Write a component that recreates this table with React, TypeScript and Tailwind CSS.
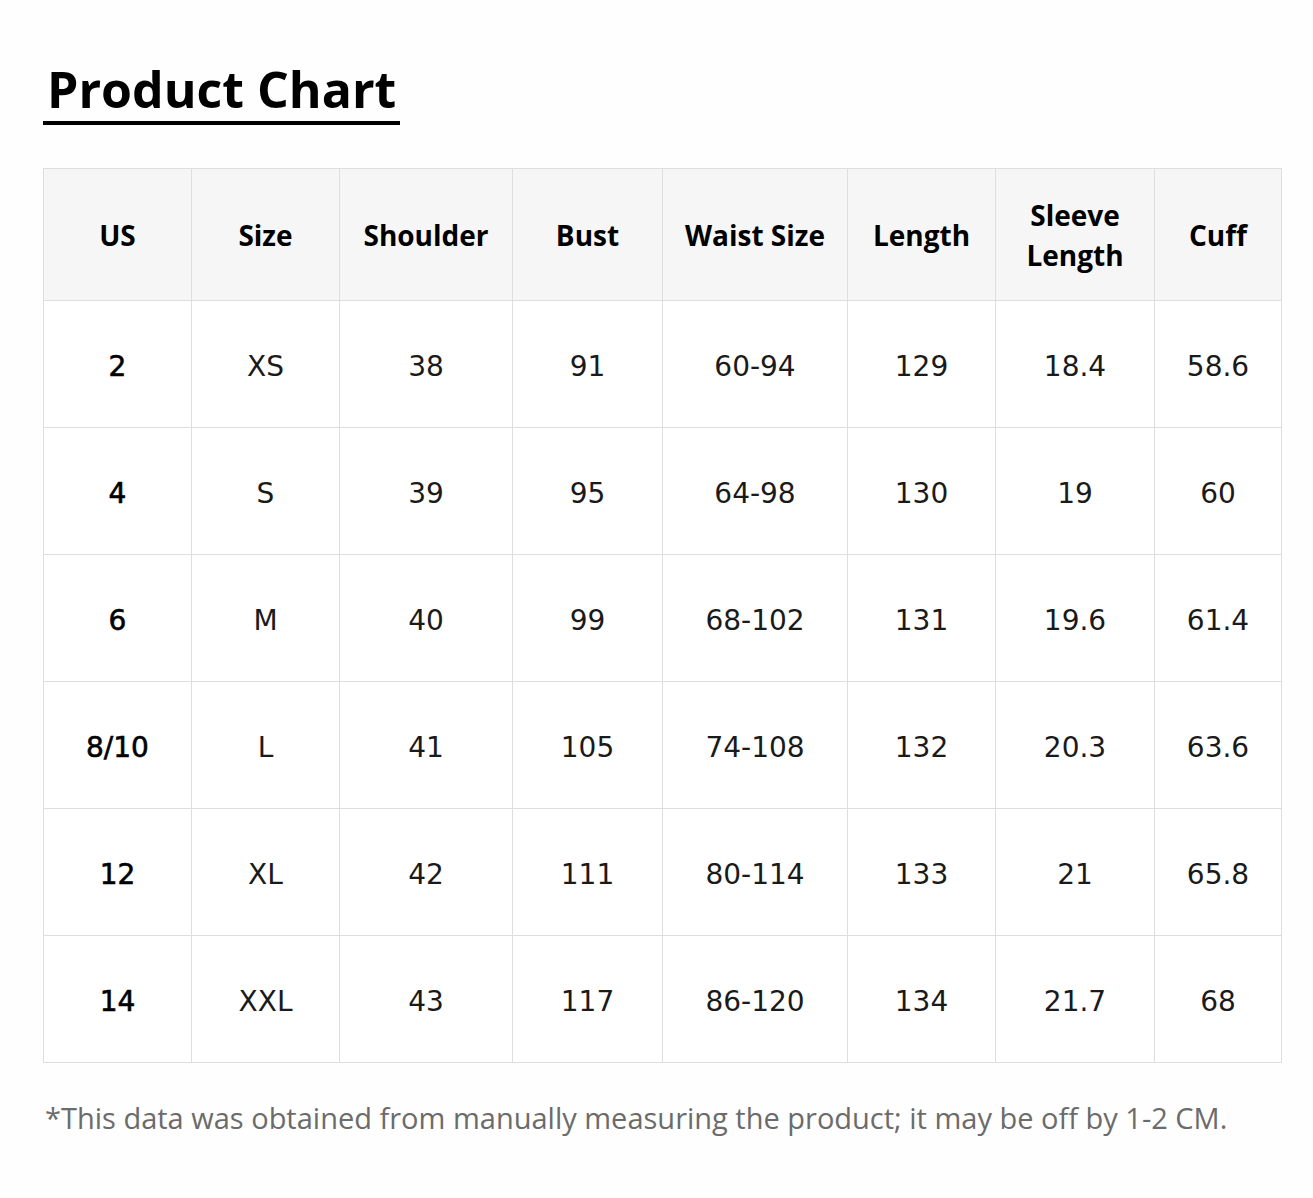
import React from 'react';

const headers = ['US', 'Size', 'Shoulder', 'Bust', 'Waist Size', 'Length', 'Sleeve Length', 'Cuff'];

const rows: string[][] = [
  ['2', 'XS', '38', '91', '60-94', '129', '18.4', '58.6'],
  ['4', 'S', '39', '95', '64-98', '130', '19', '60'],
  ['6', 'M', '40', '99', '68-102', '131', '19.6', '61.4'],
  ['8/10', 'L', '41', '105', '74-108', '132', '20.3', '63.6'],
  ['12', 'XL', '42', '111', '80-114', '133', '21', '65.8'],
  ['14', 'XXL', '43', '117', '86-120', '134', '21.7', '68'],
];

export default function App() {
  return (
    <div className="min-h-screen bg-[#fefefe] pl-[43px] pt-[64px]">
      <div className="inline-block border-b-4 border-black px-[4px] pb-[7px]">
        <h1 className="font-['Open_Sans',sans-serif] text-[50px] font-bold leading-none text-black">Product Chart</h1>
      </div>

      <div className="mt-[43px] grid w-[1239px] grid-cols-[148px_148px_173px_150px_185px_148px_159px_127px] border-l border-t border-[#dedede]">
        {headers.map((h) => (
          <div
            key={h}
            className="flex h-[132px] items-center justify-center border-b border-r border-[#dedede] bg-[#f6f6f6] px-2 text-center font-['Open_Sans',sans-serif] text-[28px] font-bold leading-[40px] text-black"
          >
            {h === 'Sleeve Length' ? (
              <span>
                Sleeve
                <br />
                Length
              </span>
            ) : (
              h
            )}
          </div>
        ))}
        {rows.map((r, i) =>
          r.map((c, j) => (
            <div
              key={i + '-' + j}
              className={
                j === 0
                  ? "flex h-[127px] items-center justify-center border-b border-r border-[#dedede] bg-white pt-[5px] font-[family-name:'DejaVu_Sans',Verdana,sans-serif] text-[28px] text-black [-webkit-text-stroke:0.6px_black]"
                  : "flex h-[127px] items-center justify-center border-b border-r border-[#dedede] bg-white pt-[5px] font-[family-name:'DejaVu_Sans',Verdana,sans-serif] text-[28px] text-[#1a1a1a]"
              }
            >
              {c}
            </div>
          ))
        )}
      </div>

      <p className="mt-[40px] pl-[2px] font-['Open_Sans',sans-serif] text-[29px] leading-none text-[#6b6b6b]">
        *This data was obtained from manually measuring the product; it may be off by 1-2 CM.
      </p>
    </div>
  );
}
